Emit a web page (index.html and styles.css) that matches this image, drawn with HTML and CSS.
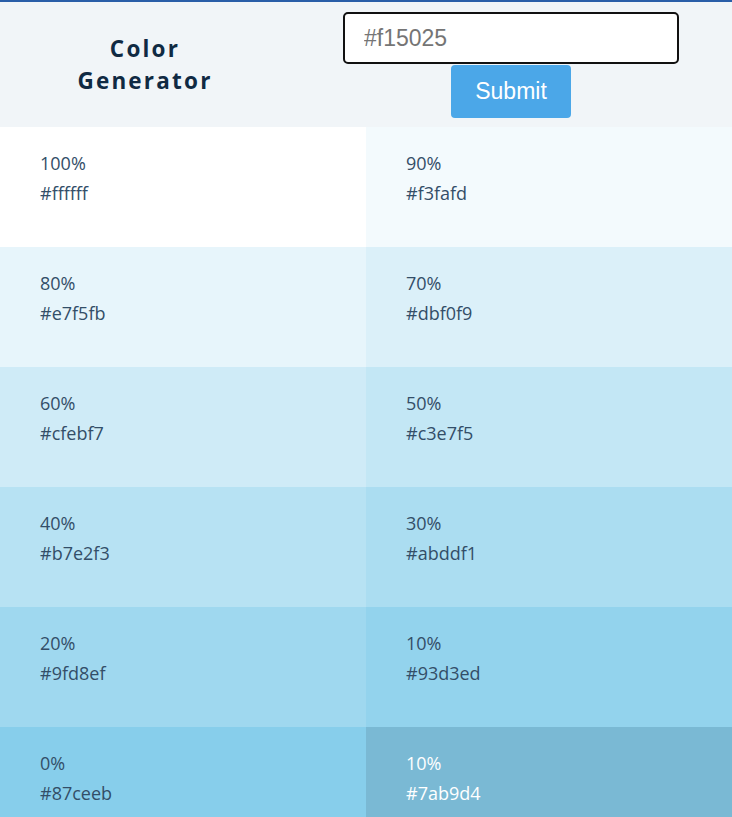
FILE: index.html
```html
<!DOCTYPE html>
<html>
<head>
<meta charset="utf-8">
<link rel="stylesheet" href="styles.css">
</head>
<body>
<header class="top">
  <h1 class="title">Color<br>Generator</h1>
  <form class="form">
    <input class="field" type="text" placeholder="#f15025">
    <button class="btn" type="button">Submit</button>
  </form>
</header>
<main class="grid">
  <div class="tile" style="background:#ffffff"><p>100%</p><p>#ffffff</p></div>
  <div class="tile" style="background:#f3fafd"><p>90%</p><p>#f3fafd</p></div>
  <div class="tile" style="background:#e7f5fb"><p>80%</p><p>#e7f5fb</p></div>
  <div class="tile" style="background:#dbf0f9"><p>70%</p><p>#dbf0f9</p></div>
  <div class="tile" style="background:#cfebf7"><p>60%</p><p>#cfebf7</p></div>
  <div class="tile" style="background:#c3e7f5"><p>50%</p><p>#c3e7f5</p></div>
  <div class="tile" style="background:#b7e2f3"><p>40%</p><p>#b7e2f3</p></div>
  <div class="tile" style="background:#abddf1"><p>30%</p><p>#abddf1</p></div>
  <div class="tile" style="background:#9fd8ef"><p>20%</p><p>#9fd8ef</p></div>
  <div class="tile" style="background:#93d3ed"><p>10%</p><p>#93d3ed</p></div>
  <div class="tile" style="background:#87ceeb"><p>0%</p><p>#87ceeb</p></div>
  <div class="tile tile-dark" style="background:#7ab9d4"><p>10%</p><p>#7ab9d4</p></div>
</main>
</body>
</html>
```
FILE: styles.css
```css
* { box-sizing: border-box; }
html, body { margin: 0; padding: 0; }
body {
  font-family: "Open Sans", "Noto Sans", sans-serif;
  border-top: 2px solid #2a5ea8;
  background: #f1f5f8;
  overflow: hidden;
}
.top {
  display: grid;
  grid-template-columns: 290px 1fr;
  background: #f1f5f8;
  height: 125px;
}
.title {
  margin: 0;
  align-self: center;
  text-align: center;
  font-size: 22.5px;
  line-height: 32px;
  font-weight: 700;
  letter-spacing: 2.2px;
  color: #102a43;
  padding-top: 1px;
}
.form {
  display: flex;
  flex-direction: column;
  align-items: center;
  padding-top: 10px;
}
.field {
  width: 336px;
  height: 52px;
  border: 2px solid #111;
  border-radius: 5px;
  background: #fff;
  padding: 0 19px;
  font-family: "Liberation Sans", Arial, sans-serif;
  font-size: 23px;
  color: #333;
  outline: none;
}
.field::placeholder { color: #757575; }
.btn {
  width: 120px;
  height: 53px;
  margin-top: 1px;
  border: none;
  border-radius: 4px;
  background: #4ba7e8;
  color: #fff;
  font-family: "Liberation Sans", Arial, sans-serif;
  font-size: 23px;
}
.grid {
  display: grid;
  grid-template-columns: 366px 366px;
  grid-auto-rows: 120px;
}
.tile {
  padding: 21px 40px;
  color: #334e68;
  font-size: 18px;
}
.tile p {
  margin: 0;
  line-height: 30px;
}
.tile-dark { color: #fff; }
```
